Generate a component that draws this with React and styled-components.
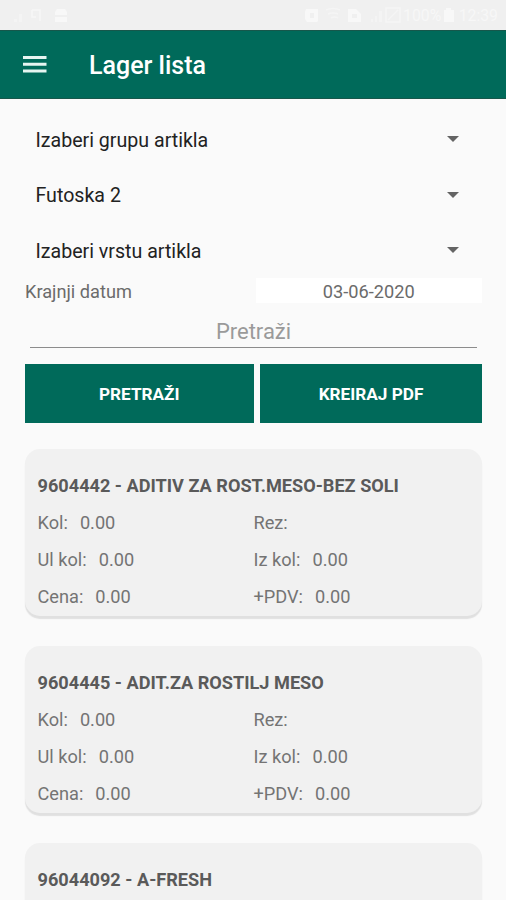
import React from 'react';
import styled, { createGlobalStyle } from 'styled-components';

const filters = ['Izaberi grupu artikla', 'Futoska 2', 'Izaberi vrstu artikla'];

const emptyStock = [
  { label: 'Kol:', value: '0.00' },
  { label: 'Rez:' },
  { label: 'Ul kol:', value: '0.00' },
  { label: 'Iz kol:', value: '0.00' },
  { label: 'Cena:', value: '0.00' },
  { label: '+PDV:', value: '0.00' },
];

const items = [
  { id: '9604442', name: 'ADITIV ZA ROST.MESO-BEZ SOLI', stock: emptyStock },
  { id: '9604445', name: 'ADIT.ZA ROSTILJ MESO', stock: emptyStock },
  { id: '96044092', name: 'A-FRESH', stock: [] },
];

const StatusBar = () => (
  <Status>
    <StatusIcons width="56" height="18" viewBox="0 0 56 18">
      <path d="M1 12h3v3H1zM6 7h3v8H6z" opacity="0.5" />
      <path d="M19 3h8v11M19 3v7h4" fill="none" stroke="#f6f6f6" strokeWidth="1.5" />
      <path d="M44 2h8l2 3v3H42V5zM42 10h12v5H42z" />
    </StatusIcons>
    <StatusRight>
      <StatusIcons width="100" height="18" viewBox="0 0 100 18">
        <path fillRule="evenodd" d="M3 2h12v12l-1 1H4l-2-3V5zM7 6v5h4V6z" />
        <path d="M23 3q7-3 14 0M25 7q5-2 10 0M28 11q4-2 7 0" fill="none" stroke="#f5f5f5" strokeWidth="1.5" />
        <path fillRule="evenodd" d="M45 2h8l5 5v8H45zM49 7h5v4h-5z" />
        <path d="M68 15v-3h2v3zM72 15V9h2v6zM76 15V4h3v11z" opacity="0.5" />
        <path d="M83 1h14v14H83zM85 13L95 3" fill="none" stroke="#f5f5f5" strokeWidth="1.5" />
      </StatusIcons>
      <StatusText $width={38}>100%</StatusText>
      <StatusIcons width="14" height="18" viewBox="0 0 14 18">
        <path d="M5 1h5v2h3v12H3V3h2z" />
      </StatusIcons>
      <StatusText $width={43} $end>12:39</StatusText>
    </StatusRight>
  </Status>
);

const Card = ({ item }) => (
  <CardBox>
    <CardTitle>{item.id} - {item.name}</CardTitle>
    <CardGrid>
      {item.stock.map(({ label, value }) => (
        <Cell key={label}>
          {label}
          {value && <Value>{value}</Value>}
        </Cell>
      ))}
    </CardGrid>
  </CardBox>
);

const App = () => (
  <Screen>
    <GlobalStyle />
    <StatusBar />
    <Toolbar>
      <MenuIcon width="24" height="18" viewBox="0 0 24 18">
        <path d="M0 1.5h23.5M0 8.3h23.5M0 15h23.5" stroke="#e6f5f1" strokeWidth="2.9" />
      </MenuIcon>
      <Title>Lager lista</Title>
    </Toolbar>
    <Content>
      {filters.map((label) => (
        <Spinner key={label}>
          {label}
          <Arrow width="12" height="6" viewBox="0 0 12 6">
            <path d="M0 0h12L6 6z" />
          </Arrow>
        </Spinner>
      ))}
      <DateRow>
        <DateLabel>Krajnji datum</DateLabel>
        <DateValue>03-06-2020</DateValue>
      </DateRow>
      <SearchInput placeholder="Pretraži" />
      <Buttons>
        <Button>PRETRAŽI</Button>
        <Button>KREIRAJ PDF</Button>
      </Buttons>
      {items.map((item) => <Card key={item.id} item={item} />)}
    </Content>
  </Screen>
);

const GlobalStyle = createGlobalStyle`
  body {
    margin: 0;
    background-color: #fafafa;
    overflow: hidden;
  }
`;

const Screen = styled.div`
  width: 506px;
  height: 900px;
  overflow: hidden;
  background-color: #fafafa;
  font-family: Roboto, sans-serif;
`;

const Status = styled.div`
  height: 30px;
  box-sizing: border-box;
  padding: 1px 8px 0 13px;
  display: flex;
  align-items: center;
  justify-content: space-between;
  background-color: #f0f0f0;
`;

const StatusRight = styled.div`
  display: flex;
  align-items: center;
`;

const StatusIcons = styled.svg`
  display: block;
  fill: #f8f8f8;
`;

const StatusText = styled.span`
  width: ${(props) => props.$width}px;
  text-align: ${(props) => (props.$end ? 'right' : 'left')};
  font-size: 15.8px;
  color: #f7f7f7;
`;

const Toolbar = styled.header`
  height: 69px;
  box-sizing: border-box;
  border-top: 1px solid #17574b;
  border-bottom: 1px solid #17574b;
  padding-left: 23px;
  display: flex;
  align-items: center;
  background-color: #006a5a;
`;

const MenuIcon = styled.svg`
  display: block;
`;

const Title = styled.h1`
  margin: 2px 0 0 42px;
  font-size: 25px;
  font-weight: 500;
  color: #fff;
`;

const Content = styled.main`
  padding: 13.5px 24px 0 25px;
`;

const Spinner = styled.div`
  height: 55.5px;
  padding: 0 23px 0 10.5px;
  display: flex;
  align-items: center;
  justify-content: space-between;
  font-size: 19.6px;
  color: #222;
`;

const Arrow = styled.svg`
  margin-bottom: 2px;
  fill: #646464;
`;

const DateRow = styled.div`
  height: 25px;
  margin-top: -1px;
  display: grid;
  grid-template-columns: 230.5px 1fr;
  align-items: center;
  font-size: 18.2px;
  color: #6b6b6b;
`;

const DateLabel = styled.label`
  padding-top: 1px;
`;

const DateValue = styled.div`
  height: 25px;
  line-height: 27px;
  background-color: #fff;
  text-align: center;
`;

const SearchInput = styled.input`
  display: block;
  width: 447px;
  height: 36px;
  margin: 9px 0 0 5px;
  padding: 4px 0 0;
  box-sizing: border-box;
  border: none;
  border-bottom: 1.5px solid #8c8c8c;
  background: none;
  outline: none;
  text-align: center;
  font-family: inherit;
  font-size: 22px;

  &::placeholder {
    color: #9a9a9a;
    opacity: 1;
  }
`;

const Buttons = styled.div`
  margin-top: 16px;
  display: grid;
  grid-template-columns: 228.5px 222px;
  gap: 6.5px;
`;

const Button = styled.button`
  height: 58.5px;
  padding: 1px 0 0;
  border: none;
  background-color: #006a5a;
  color: #fff;
  font-family: inherit;
  font-size: 17.2px;
  font-weight: 700;
`;

const CardBox = styled.section`
  height: 167px;
  margin-top: 26.5px;
  margin-bottom: 30px;
  padding: 20px 12px 0 12.5px;
  box-sizing: border-box;
  border-radius: 15px;
  background-color: #f1f1f1;
  box-shadow: 0 3px 1px #e0e0e0;

  & + & {
    margin-top: 0;
  }
`;

const CardTitle = styled.h2`
  margin: 0;
  height: 35px;
  line-height: 33px;
  font-size: 18.15px;
  font-weight: 700;
  color: #5a5a5a;
  white-space: nowrap;
`;

const CardGrid = styled.div`
  display: grid;
  grid-template-columns: 216px 1fr;
  grid-auto-rows: 37px;
`;

const Cell = styled.div`
  display: flex;
  align-items: center;
  font-size: 18.2px;
  color: #747474;
`;

const Value = styled.span`
  margin-left: 12px;
`;

export default App;
